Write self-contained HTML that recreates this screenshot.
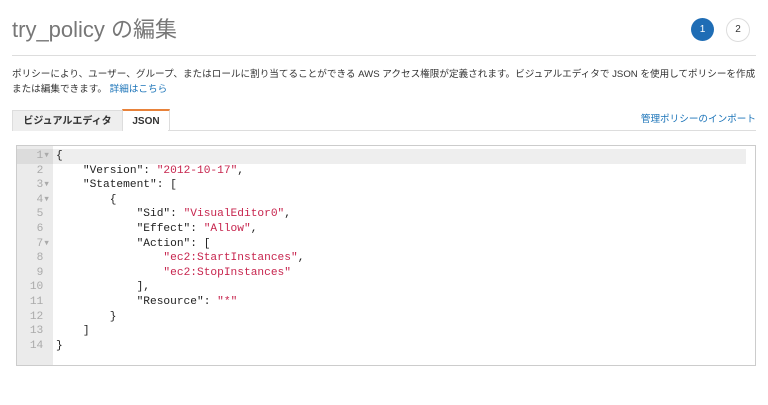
<!DOCTYPE html>
<html><head><meta charset="utf-8"><style>
body{margin:0;width:768px;height:405px;background:#fff;font-family:"Liberation Sans","Noto Sans CJK JP",sans-serif;position:relative;overflow:hidden}
.a{position:absolute}
.title{left:12px;top:12px;font-size:22px;color:#777}
.hr{left:12px;width:744px;height:1px;background:#ddd}
.desc{left:12px;top:67px;font-size:9.6px;color:#333;line-height:15px;white-space:nowrap}
.desc a{color:#1a73b8;text-decoration:none}
.c{width:23px;height:23px;border-radius:50%;font-size:10px;text-align:center;line-height:23px}
.tab{top:110px;height:20px;font-size:10px;font-weight:bold;color:#333;text-align:center;line-height:21px}
.ed{left:16px;top:145px;width:738px;height:219px;border:1px solid #ccc;background:#fff}
.gut{left:0;top:0;width:36px;height:219px;background:#ebebeb}
pre{margin:0;font-family:"Liberation Mono",monospace;font-size:11.2px;line-height:14.6px;color:#222}
.s{color:#c7254e}
.ln{color:#aaa;text-align:right}
</style></head><body>
<div class="a title">try_policy の編集</div>
<div class="a c" style="left:691px;top:18px;background:#1f6db5;color:#fff">1</div>
<div class="a c" style="left:726px;top:18px;border:1px solid #ddd;width:22px;height:22px;line-height:22px;color:#333">2</div>
<div class="a hr" style="top:55px"></div>
<div class="a desc">ポリシーにより、ユーザー、グループ、またはロールに割り当てることができる AWS アクセス権限が定義されます。ビジュアルエディタで JSON を使用してポリシーを作成<br>または編集できます。 <a>詳細はこちら</a></div>
<div class="a tab" style="left:12px;width:109px;background:#eee;border:1px solid #ddd;border-bottom:none">ビジュアルエディタ</div>
<div class="a tab" style="left:122px;width:46px;border:1px solid #ddd;border-top:2px solid #e8823a;border-bottom:none;top:109px;background:#fff">JSON</div>
<div class="a" style="right:12px;top:111px;font-size:9.6px;color:#1a73b8">管理ポリシーのインポート</div>
<div class="a hr" style="top:130px;left:168px;width:588px"></div>
<div class="a ed">
<div class="a gut"></div>
<div class="a" style="left:36px;top:3px;width:693px;height:15px;background:#eee"></div>
<div class="a" style="left:0;top:3px;width:36px;height:15px;background:#dcdcdc"></div>
<pre class="a ln" style="left:0;top:3px;width:33px">1▾
2 
3▾
4▾
5 
6 
7▾
8 
9 
10 
11 
12 
13 
14 </pre>
<pre class="a" style="left:39px;top:3px">{
    "Version": <span class="s">"2012-10-17"</span>,
    "Statement": [
        {
            "Sid": <span class="s">"VisualEditor0"</span>,
            "Effect": <span class="s">"Allow"</span>,
            "Action": [
                <span class="s">"ec2:StartInstances"</span>,
                <span class="s">"ec2:StopInstances"</span>
            ],
            "Resource": <span class="s">"*"</span>
        }
    ]
}</pre>
</div>
</body></html>
